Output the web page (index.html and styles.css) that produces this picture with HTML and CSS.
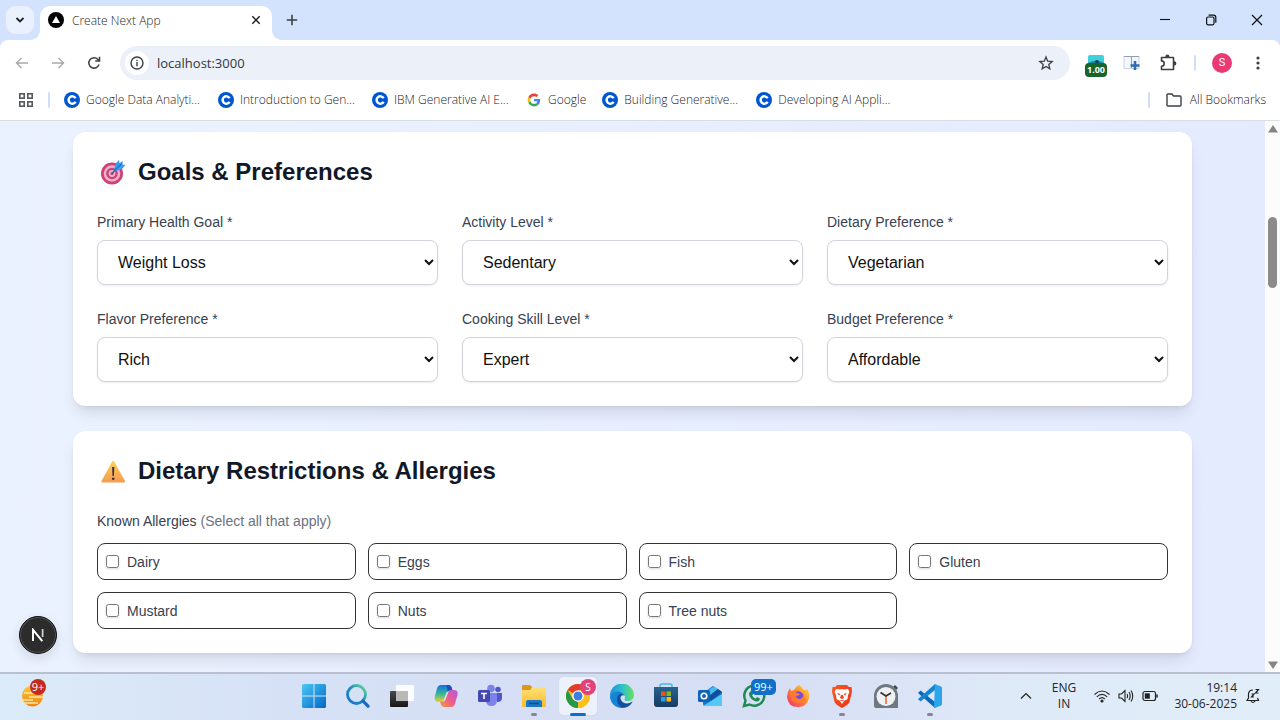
FILE: index.html
```html
<!DOCTYPE html>
<html lang="en">
<head>
<meta charset="utf-8">
<title>Create Next App</title>
<link rel="stylesheet" href="styles.css">
</head>
<body>
<svg class="defs" aria-hidden="true">
  <defs>
    <symbol id="coursera" viewBox="0 0 16 16"><circle cx="8" cy="8" r="8" fill="#0056d2"/><path d="M11.600 6.300A3.700 3.700 0 1 0 11.600 9.700" fill="none" stroke="#fff" stroke-width="2.500"/></symbol>
    <linearGradient id="gWin" x1="0" y1="0" x2="1" y2="1"><stop offset="0" stop-color="#4cc8f4"/><stop offset="1" stop-color="#0067c8"/></linearGradient>
    <linearGradient id="gSearch" x1="0" y1="1" x2="1" y2="0"><stop offset="0" stop-color="#1573cf"/><stop offset=".5" stop-color="#1b8bc4"/><stop offset="1" stop-color="#63e08c"/></linearGradient>
    <linearGradient id="gDark" x1="0" y1="0" x2="0" y2="1"><stop offset="0" stop-color="#4a4a4a"/><stop offset="1" stop-color="#161616"/></linearGradient>
    <linearGradient id="gCopA" x1="0" y1="0" x2="0" y2="1"><stop offset="0" stop-color="#1b6ee0"/><stop offset=".5" stop-color="#2fb59a"/><stop offset="1" stop-color="#f0cf2e"/></linearGradient>
    <linearGradient id="gCopB" x1="1" y1="0" x2="0" y2="1"><stop offset="0" stop-color="#b05be8"/><stop offset=".5" stop-color="#ee5a8d"/><stop offset="1" stop-color="#f89a3c"/></linearGradient>
    <linearGradient id="gFolder" x1="0" y1="0" x2="0" y2="1"><stop offset="0" stop-color="#ffe07a"/><stop offset="1" stop-color="#f8bc28"/></linearGradient>
    <linearGradient id="gEdge" x1="0" y1="0" x2="1" y2="0"><stop offset="0" stop-color="#1d8fdc"/><stop offset=".5" stop-color="#2cc0cf"/><stop offset="1" stop-color="#6be25c"/></linearGradient>
    <linearGradient id="gStore" x1="0" y1="0" x2="0" y2="1"><stop offset="0" stop-color="#28648f"/><stop offset="1" stop-color="#173a63"/></linearGradient>
    <linearGradient id="gFox" x1="1" y1="0" x2="0" y2="1"><stop offset="0" stop-color="#ffe14a"/><stop offset=".45" stop-color="#ff8a2a"/><stop offset="1" stop-color="#f0287a"/></linearGradient>
    <linearGradient id="gBrave" x1="0" y1="0" x2="1" y2="1"><stop offset="0" stop-color="#ff5a1f"/><stop offset="1" stop-color="#e8321c"/></linearGradient>
    <linearGradient id="gWarn" x1="0" y1="0" x2="0" y2="1"><stop offset="0" stop-color="#fdd05c"/><stop offset="1" stop-color="#f59a52"/></linearGradient>
    <linearGradient id="gSun" x1="0" y1="0" x2="0" y2="1"><stop offset="0" stop-color="#fcc93a"/><stop offset="1" stop-color="#f08514"/></linearGradient>
  </defs>
</svg>

<header class="chrome">
  <div class="tabstrip">
    <button class="tab-search" aria-label="Search tabs"><svg width="10" height="8" viewBox="0 0 10 8"><path d="M1.500 2 5 5.500 8.500 2" fill="none" stroke="#1f2023" stroke-width="1.800"/></svg></button>
    <div class="tab">
      <svg width="16" height="16" viewBox="0 0 16 16"><circle cx="8" cy="8" r="8" fill="#000"/><path d="M8 4 12 11H4Z" fill="#fff"/></svg>
      <span class="tab-title">Create Next App</span>
      <button class="icon-btn tab-close" aria-label="Close tab"><svg width="10" height="10" viewBox="0 0 10 10"><path d="M1.300 1.300 8.700 8.700M8.700 1.300 1.300 8.700" stroke="#1f2023" stroke-width="1.500"/></svg></button>
    </div>
    <button class="icon-btn new-tab" aria-label="New tab"><svg width="12" height="12" viewBox="0 0 12 12"><path d="M6 .800V11.200M.800 6H11.200" stroke="#3c4043" stroke-width="1.600"/></svg></button>
    <div class="window-controls">
      <button class="win-btn" aria-label="Minimize"><svg width="12" height="12" viewBox="0 0 12 12"><path d="M1 5.500H11" stroke="#111" stroke-width="1.100"/></svg></button>
      <button class="win-btn" aria-label="Restore"><svg width="12" height="12" viewBox="0 0 12 12"><g fill="none" stroke="#111" stroke-width="1.200"><rect x="1.600" y="3" width="7.400" height="7.800" rx="1.500"/><path d="M3.600 1.200H8.500Q10.800 1.200 10.800 3.500V8.800"/></g></svg></button>
      <button class="win-btn" aria-label="Close"><svg width="12" height="12" viewBox="0 0 12 12"><path d="M1 1 11 11M11 1 1 11" stroke="#111" stroke-width="1.200"/></svg></button>
    </div>
  </div>

  <div class="toolbar">
    <div class="tool-group">
      <button class="tool-btn" aria-label="Back"><svg width="14" height="12" viewBox="0 0 14 12"><path d="M13 6H1.500M6.500 1 1.500 6 6.500 11" fill="none" stroke="#a7a9ac" stroke-width="1.400"/></svg></button>
      <button class="tool-btn" aria-label="Forward"><svg width="14" height="12" viewBox="0 0 14 12"><path d="M1 6H12.500M7.500 1 12.500 6 7.500 11" fill="none" stroke="#a7a9ac" stroke-width="1.400"/></svg></button>
      <button class="tool-btn" aria-label="Reload"><svg width="14" height="14" viewBox="0 0 14 14"><path d="M12 8.500A5.200 5.200 0 1 1 10.800 3.300L12.300 4.800" fill="none" stroke="#3c4043" stroke-width="1.500"/><path d="M12.500 .800V5H8.200" fill="none" stroke="#3c4043" stroke-width="1.500"/></svg></button>
    </div>
    <div class="omnibox">
      <button class="site-info" aria-label="View site information"><svg width="14" height="14" viewBox="0 0 14 14"><circle cx="7" cy="7" r="6" fill="none" stroke="#3c4043" stroke-width="1.400"/><path d="M7 6V10.300M7 3.700V5" stroke="#3c4043" stroke-width="1.400"/></svg></button>
      <input class="address" type="text" aria-label="Address" value="localhost:3000">
      <button class="icon-btn" aria-label="Bookmark this tab"><svg width="16" height="16" viewBox="0 0 16 16"><path d="M8 2 9.700 6.200 14.200 6.600 10.800 9.500 11.800 13.800 8 11.500 4.200 13.800 5.200 9.500 1.800 6.600 6.300 6.200Z" fill="none" stroke="#3c4043" stroke-width="1.300"/></svg></button>
    </div>
    <div class="tool-group extensions">
      <button class="tool-btn ext" aria-label="Video speed 1.00"><svg width="16" height="16" viewBox="0 0 16 16"><rect width="16" height="14" rx="2" fill="#3fd0d8"/><path d="M0 8Q8 3 16 8V12H0Z" fill="#168fa5"/><circle cx="9" cy="7" r="2" fill="#123f63"/></svg><span class="ext-badge">1.00</span></button>
      <button class="tool-btn" aria-label="Screenshot"><svg width="18" height="16" viewBox="0 0 18 16"><rect x="1" y="1.500" width="15" height="12" fill="#f3f6fb" stroke="#cdd4df"/><path d="M1 1.500H16M8.500 1.500V13" stroke="#93a0b4"/><path d="M12 6V15M7.500 10.500H16.500" stroke="#2f6cad" stroke-width="2.600"/></svg></button>
      <button class="tool-btn" aria-label="Extensions"><svg width="18" height="18" viewBox="0 0 18 18"><path d="M2.500 3.500H14.500V15.500H2.500V12.300A2.700 2.700 0 0 0 2.500 6.900Z" fill="none" stroke="#3c4043" stroke-width="1.600" stroke-linejoin="round"/><path d="M6.300 3.500V2.700A2.100 2.100 0 0 1 10.500 2.700V3.500ZM14.500 7.300H15.300A2.100 2.100 0 0 1 15.300 11.500H14.500Z" fill="#3c4043"/></svg></button>
      <span class="divider"></span>
      <button class="tool-btn" aria-label="Profile"><span class="avatar">S</span></button>
      <button class="tool-btn" aria-label="Menu"><svg width="4" height="16" viewBox="0 0 4 16" fill="#3c4043"><circle cx="2" cy="3" r="1.600"/><circle cx="2" cy="8" r="1.600"/><circle cx="2" cy="13" r="1.600"/></svg></button>
    </div>
  </div>

  <nav class="bookmarks" aria-label="Bookmarks">
    <button class="icon-btn apps" aria-label="Tab groups"><svg width="16" height="16" viewBox="0 0 16 16" fill="none" stroke="#55585c" stroke-width="1.600"><rect x="1.800" y="1.800" width="4.400" height="4.400"/><rect x="9.800" y="1.800" width="4.400" height="4.400"/><rect x="1.800" y="9.800" width="4.400" height="4.400"/><rect x="9.800" y="9.800" width="4.400" height="4.400"/></svg></button>
    <span class="divider"></span>
    <div class="bookmark-list">
      <a class="bookmark long" href="#"><svg width="16" height="16"><use href="#coursera"/></svg>Google Data Analyti...</a>
      <a class="bookmark long" href="#"><svg width="16" height="16"><use href="#coursera"/></svg>Introduction to Gen...</a>
      <a class="bookmark long" href="#"><svg width="16" height="16"><use href="#coursera"/></svg>IBM Generative AI E...</a>
      <a class="bookmark" href="#"><svg width="16" height="16" viewBox="-6 -6 60 60"><path fill="#EA4335" d="M24 9.500c3.540 0 6.710 1.220 9.210 3.600l6.850-6.850C35.900 2.380 30.470 0 24 0 14.620 0 6.510 5.380 2.560 13.220l7.980 6.190C12.430 13.720 17.740 9.500 24 9.500z"/><path fill="#4285F4" d="M46.980 24.550c0-1.570-.15-3.090-.38-4.550H24v9.020h12.940c-.58 2.960-2.260 5.480-4.780 7.180l7.730 6c4.510-4.180 7.090-10.360 7.090-17.650z"/><path fill="#FBBC05" d="M10.530 28.590A14.500 14.500 0 0 1 9.770 24c0-1.600.27-3.140.76-4.590l-7.980-6.190A24 24 0 0 0 0 24c0 3.880.92 7.540 2.560 10.780z"/><path fill="#34A853" d="M24 48c6.480 0 11.930-2.130 15.890-5.810l-7.730-6c-2.150 1.450-4.920 2.300-8.160 2.300-6.260 0-11.570-4.220-13.470-9.910l-7.980 6.190C6.510 42.620 14.620 48 24 48z"/></svg>Google</a>
      <a class="bookmark long" href="#"><svg width="16" height="16"><use href="#coursera"/></svg>Building Generative...</a>
      <a class="bookmark long" href="#"><svg width="16" height="16"><use href="#coursera"/></svg>Developing AI Appli...</a>
    </div>
    <span class="divider"></span>
    <button class="all-bookmarks"><svg width="16" height="14" viewBox="0 0 16 14"><path d="M1 2Q1 1 2 1H6L7.500 3H14Q15 3 15 4V12Q15 13 14 13H2Q1 13 1 12Z" fill="none" stroke="#3c4043" stroke-width="1.400"/></svg>All Bookmarks</button>
  </nav>
</header>

<div class="viewport">
  <main class="page">
    <section class="card">
      <h2 class="card-title"><svg class="emoji" width="32" height="28" viewBox="0 0 32 28"><circle cx="15" cy="15.500" r="11" fill="#cf3f78"/><circle cx="15" cy="15.500" r="8.300" fill="#edb3cd"/><circle cx="15" cy="15.500" r="5.800" fill="#cf3f78"/><circle cx="15" cy="15.500" r="3.400" fill="#edb3cd"/><circle cx="15" cy="15.500" r="1.600" fill="#cf3f78"/><path d="M15 15.500 22 8" stroke="#315b8e" stroke-width="1.300"/><path d="M17 11 19 5 22 2 22.500 5 26 3 25.200 6.500 28.500 7 25 11 19 13Z" fill="#3b9cf0"/><path d="M18 12 25 5.500" stroke="#1c72cc" stroke-width="1.200"/></svg>Goals &amp; Preferences</h2>
      <div class="field-grid">
        <div class="field"><label for="goal">Primary Health Goal *</label><select id="goal"><option>Weight Loss</option></select></div>
        <div class="field"><label for="activity">Activity Level *</label><select id="activity"><option>Sedentary</option></select></div>
        <div class="field"><label for="diet">Dietary Preference *</label><select id="diet"><option>Vegetarian</option></select></div>
        <div class="field"><label for="flavor">Flavor Preference *</label><select id="flavor"><option>Rich</option></select></div>
        <div class="field"><label for="skill">Cooking Skill Level *</label><select id="skill"><option>Expert</option></select></div>
        <div class="field"><label for="budget">Budget Preference *</label><select id="budget"><option>Affordable</option></select></div>
      </div>
    </section>

    <section class="card">
      <h2 class="card-title"><svg class="emoji" width="32" height="28" viewBox="0 0 32 28"><path d="M15.200 4.500Q16.200 3 17.200 4.500L28 24Q28.500 25.500 27 25.500H5.500Q4 25.500 4.500 24Z" fill="url(#gWarn)"/><path d="M15.100 10H17.300L16.900 19H15.500Z" fill="#3c3340"/><circle cx="16.200" cy="21.800" r="1.300" fill="#3c3340"/></svg>Dietary Restrictions &amp; Allergies</h2>
      <fieldset class="allergies">
        <legend>Known Allergies <span class="hint">(Select all that apply)</span></legend>
        <div class="option-grid">
          <label class="option"><input type="checkbox">Dairy</label>
          <label class="option"><input type="checkbox">Eggs</label>
          <label class="option"><input type="checkbox">Fish</label>
          <label class="option"><input type="checkbox">Gluten</label>
          <label class="option"><input type="checkbox">Mustard</label>
          <label class="option"><input type="checkbox">Nuts</label>
          <label class="option"><input type="checkbox">Tree nuts</label>
        </div>
      </fieldset>
    </section>
  </main>
  <div class="scrollbar" aria-hidden="true">
    <svg width="10" height="8" viewBox="0 0 10 8"><path d="M5 0 10 7.500H0Z" fill="#858585"/></svg>
    <div class="track"><div class="thumb"></div></div>
    <svg width="10" height="8" viewBox="0 0 10 8"><path d="M5 8 10 .500H0Z" fill="#858585"/></svg>
  </div>
  <button class="dev-badge" aria-label="Open Next.js Dev Tools"><svg width="14" height="14" viewBox="0 0 14 14"><path d="M2 13V1.800L11.300 13.200" fill="none" stroke="#fff" stroke-width="2"/><path d="M11.600 1V9" stroke="#ccc" stroke-width="1.800"/></svg></button>
</div>

<footer class="taskbar">
  <div class="widgets">
    <button class="task" aria-label="Widgets"><svg width="24" height="26" viewBox="0 0 24 26"><circle cx="12.500" cy="13" r="10.500" fill="url(#gSun)"/><path d="M4 10H14M9 14H23M0 17H13M3 20H18" stroke="#fde5a4" stroke-width="1.500"/></svg><span class="badge red">9+</span></button>
  </div>
  <div class="apps-row">
    <button class="task" aria-label="Start"><svg width="24" height="24" viewBox="0 0 24 24" fill="url(#gWin)"><path d="M1.500 0H11.500V11.500H0V1.500Q0 0 1.500 0ZM12.500 0H22.500Q24 0 24 1.500V11.500H12.500ZM0 12.500H11.500V24H1.500Q0 24 0 22.500ZM12.500 12.500H24V22.500Q24 24 22.500 24H12.500Z"/></svg></button>
    <button class="task" aria-label="Search"><svg width="24" height="24" viewBox="0 0 24 24" fill="none"><circle cx="10.500" cy="10.500" r="9" stroke="url(#gSearch)" stroke-width="2.800"/><path d="M17 17 22 22.200" stroke="#1668c2" stroke-width="3.200" stroke-linecap="round"/></svg></button>
    <button class="task" aria-label="Task view"><svg width="24" height="24" viewBox="0 0 24 24"><rect y="7" width="18" height="16" rx="1" fill="url(#gDark)"/><rect x="6" y="1" width="18" height="16" rx="1" fill="#fff" fill-opacity=".88"/><path d="M6 7H18V17H6Z" fill="#b8b8b8"/></svg></button>
    <button class="task" aria-label="Copilot"><svg width="24" height="24" viewBox="0 0 24 24"><path d="M7 1H14Q17 1 17.800 4L18.500 7H15Q13 7 12.200 9L9.500 16.500Q9 18 7 18H4Q0 18 .700 13L3 4.500Q4 1 7 1Z" fill="url(#gCopA)"/><path d="M17 23H10Q7.500 23 6.700 20L6 17.500H9Q11 17.500 11.800 15L14.500 7.500Q15 6 17 6H20Q24.500 6 23.500 11L21 19.500Q20 23 17 23Z" fill="url(#gCopB)"/><path d="M12.500 1H14Q17 1 17.800 4L18.300 6H16Q14.500 6 13.700 8Z" fill="#1b4fc0"/></svg></button>
    <button class="task" aria-label="Teams"><svg width="24" height="24" viewBox="0 0 24 24"><circle cx="20" cy="5.500" r="2.800" fill="#5059c9"/><circle cx="13" cy="4.500" r="3.800" fill="#7b83eb"/><path d="M17 9H24V14Q24 18 19 18Z" fill="#5059c9"/><path d="M8 9H19V16Q19 22 13.500 22 8 22 8 16Z" fill="#7b83eb"/><rect y="6" width="12" height="12" rx="1.500" fill="#4349ae"/><path d="M3 9.500H9M6 9.500V15" stroke="#fff" stroke-width="1.600"/></svg></button>
    <button class="task running" aria-label="File Explorer"><svg width="24" height="24" viewBox="0 0 24 24"><path d="M0 2Q0 1 1.500 1H8L10 3V7H0Z" fill="#d9971c"/><path d="M0 6H8L10.500 3H22.500Q24 3 24 4.500V22Q24 23 23 23H1Q0 23 0 22Z" fill="url(#gFolder)"/><path d="M4 23V18Q4 16 6 16H18Q20 16 20 18V23Z" fill="#1a77c9"/><path d="M7 19.500H17" stroke="#104a86" stroke-width="1.500"/></svg></button>
    <button class="task active" aria-label="Google Chrome"><svg width="24" height="24" viewBox="0 0 24 24"><circle cx="12" cy="12" r="12" fill="#fbc11a"/><path d="M12 12 1.600 6A12 12 0 0 1 22.400 6H12Z" fill="#e33b2e"/><path d="M1.600 6 7 15.500 12 17.500 12 24A12 12 0 0 1 1.600 6Z" fill="#279847"/><path d="M22.400 6H12L17 15 12 24A12 12 0 0 0 22.400 6Z" fill="#fbc11a"/><circle cx="12" cy="12" r="5.800" fill="#fff"/><circle cx="12" cy="12" r="4.500" fill="#3b7ee8"/></svg><span class="badge pink">S</span></button>
    <button class="task" aria-label="Microsoft Edge"><svg width="24" height="24" viewBox="0 0 24 24"><path d="M0 12A12 12 0 0 1 24 11C24 15 21 17 18 17 15 17 14 16 14.800 14.500 16 12 13 8 8.500 8 4 8 1 10 0 12Z" fill="url(#gEdge)"/><path d="M0 12C1 9 4 7.500 8 7.500 11 7.500 14 9.500 15 12 13 10 10 10.500 9.500 13 9 17 13 21 18 20.500 20 20.500 21 20 22 19 20 22 16 24 12 24 5 24 0 18.500 0 12Z" fill="#1684d2"/><path d="M8 12C9 9.500 12 9.500 14.500 11.500 11.500 10.800 9.500 13 11 16 13 20 18 20.500 22.500 17.500 22.500 19 18 24 12.500 23.500 7.500 22 6 16 8 12Z" fill="#124e9e"/></svg></button>
    <button class="task" aria-label="Microsoft Store"><svg width="24" height="26" viewBox="0 0 24 26"><path d="M6 6V3Q6 1 8 1H16Q18 1 18 3V6" fill="none" stroke="#46b6e8" stroke-width="1.500"/><path d="M0 4H24V21Q24 24 21 24H3Q0 24 0 21Z" fill="url(#gStore)"/><path d="M7 8.500H11.500V13H7Z" fill="#ef5325"/><path d="M12.500 8.500H17V13H12.500Z" fill="#80bb1a"/><path d="M7 14H11.500V18.500H7Z" fill="#25a2ec"/><path d="M12.500 14H17V18.500H12.500Z" fill="#fbb912"/></svg></button>
    <button class="task" aria-label="Outlook"><svg width="24" height="24" viewBox="0 0 24 24"><path d="M5 9 15 2 24 8V20Q24 22 22 22H7Q5 22 5 20Z" fill="#1677d2"/><path d="M7 8 16 2.500 20 5 9 13Z" fill="#48b9f1"/><path d="M9 14 20 5 24 8 13 17Z" fill="#104d9a"/><path d="M5 22 24 10V20Q24 22 22 22Z" fill="#54c9f6"/><rect y="6" width="12" height="12" rx="1.500" fill="#0f64b8"/><circle cx="6" cy="12" r="2.800" fill="none" stroke="#fff" stroke-width="1.600"/></svg></button>
    <button class="task" aria-label="WhatsApp"><svg width="24" height="24" viewBox="0 0 24 24"><path d="M2 22 3.500 16.500A10 10 0 1 1 7.500 20.500Z" fill="none" stroke="#1e8b52" stroke-width="2.500"/><path d="M8 7.500 10 7 11.200 10 10 11.500Q11.500 14 13.800 14.500L15 13 18 14.500Q17.500 17.500 15 17.500C10.500 17 7 13 7 9.500Z" fill="#1e8b52"/></svg><span class="badge blue">99+</span></button>
    <button class="task" aria-label="Firefox"><svg width="24" height="24" viewBox="0 0 24 24"><path d="M13 1Q17 4 17.500 6 20 6 21 5 24 9 23 14 21 23 12 23 2 23 1 13 1 8 4 4L5 7 8 6Q9 3 13 1Z" fill="url(#gFox)"/><circle cx="12" cy="13" r="5.800" fill="#7b48d8"/><path d="M4 8Q8 6 11 9L14 10Q13 12 10 12 10 15 14 15 18 14 17 9 21 15 16 18 10 21 6 16 4 12 4 8Z" fill="#ff7b29"/></svg></button>
    <button class="task running" aria-label="Brave"><svg width="24" height="24" viewBox="0 0 24 24"><path d="M7 1H17L19 3 21.500 3 22 7.500 19.500 18Q18 21 12 24 6 21 4.500 18L2 7.500 2.500 3H5Z" fill="url(#gBrave)"/><path d="M6 5 10 5.500 12 5 14 5.500 18 5 19.500 8 18 11 17.500 15 14 17 12 20 10 17 6.500 15 6 11 4.500 8Z" fill="#fff"/><path d="M7 9 10.500 10 9 11.500ZM17 9 13.500 10 15 11.500ZM11 11 10 14 12 15 14 14 13 11ZM9 16H15L12 17Z" fill="#ee4520"/></svg></button>
    <button class="task" aria-label="Clock"><svg width="24" height="24" viewBox="0 0 24 24"><path d="M19 3 21 1 24 4 22 6Z" fill="#3d454d"/><path d="M0 12A12 12 0 0 1 24 12V24H2Q0 24 0 22Z" fill="#6e7881"/><circle cx="12" cy="12.500" r="9.500" fill="#eef0f2"/><path d="M12 12V20" stroke="#e3682d" stroke-width="1.500"/><path d="M6.500 8.500 12 12 17 9" fill="none" stroke="#333" stroke-width="1.700"/></svg></button>
    <button class="task running" aria-label="Visual Studio Code"><svg width="24" height="24" viewBox="0 0 24 24"><path d="M2.500 6.500 17 18V24L0 9Z" fill="#0b69b8"/><path d="M0 15 17 0V6L2.500 17.500Z" fill="#1685d0"/><path d="M17 0 23 2.500Q24 3 24 4V20Q24 21 23 21.500L17 24 16 23Z" fill="#2aa5ee"/></svg></button>
  </div>
  <div class="tray">
    <button class="tray-btn" aria-label="Show hidden icons"><svg width="12" height="8" viewBox="0 0 12 8"><path d="M1 6.500 6 1.500 11 6.500" fill="none" stroke="#222" stroke-width="1.200"/></svg></button>
    <button class="tray-text language">ENG<br>IN</button>
    <button class="tray-btn quick" aria-label="Network, volume, battery">
      <svg width="16" height="14" viewBox="0 0 16 14" fill="none" stroke="#222" stroke-width="1.100"><path d="M.500 5.500Q8-1.500 15.500 5.500M2.800 7.800Q8 3 13.200 7.800M5.200 10Q8 7.300 10.800 10"/><circle cx="8" cy="12" r="1" fill="#222"/></svg>
      <svg width="16" height="14" viewBox="0 0 16 14" fill="none" stroke="#222" stroke-width="1.100"><path d="M1 5H3.500L7 1.500V12.500L3.500 9H1ZM9 5Q10.200 7 9 9M11 3Q13.400 7 11 11M13 1.500Q16.500 7 13 12.500"/></svg>
      <svg width="16" height="14" viewBox="0 0 16 14"><rect x="1" y="2.500" width="12.500" height="9" rx="2" fill="none" stroke="#222" stroke-width="1.200"/><rect x="2.800" y="4.300" width="5" height="5.400" fill="#222"/><path d="M15 5.500V8.500" stroke="#222" stroke-width="1.500"/></svg>
    </button>
    <button class="tray-text clock">19:14<br>30-06-2025</button>
    <button class="tray-btn" aria-label="Notifications"><svg width="14" height="16" viewBox="0 0 14 16" fill="none" stroke="#222" stroke-width="1.200"><path d="M7 2Q2.500 2 2.500 6.500V10L1 12.500H12.500L11.500 10M5 13Q7 16 9 13"/><path d="M5.500 6H8L5.500 9H8M9.500 1.500H12.500L9.500 5H12.500"/></svg></button>
  </div>
</footer>
</body>
</html>
```
FILE: styles.css
```css
* { box-sizing: border-box; }

body {
  margin: 0;
  height: 100vh;
  display: flex;
  flex-direction: column;
  overflow: hidden;
  background: #fff;
  font-family: "Liberation Sans", Arial, sans-serif;
}

button {
  border: 0;
  padding: 0;
  background: none;
  font: inherit;
  color: inherit;
}

svg { display: block; flex: none; }
.defs { position: absolute; width: 0; height: 0; }

/* Browser chrome */
.chrome {
  flex: none;
  background: #d3e2fd;
  color: #1f2225;
  font: 300 12px/16px "Open Sans", "Noto Sans", sans-serif;
}

.tabstrip { display: flex; height: 40px; padding-left: 6px; }

.tab-search {
  display: grid;
  place-items: center;
  width: 28px;
  height: 28px;
  margin: 6px 6px 0 0;
  border-radius: 9px;
  background: #e9f0fe;
}

.tab {
  position: relative;
  display: flex;
  align-items: center;
  width: 232px;
  margin-top: 6px;
  padding: 0 6px 6px 8px;
  border-radius: 10px 10px 0 0;
  background: #fff;
}
.tab::before,
.tab::after {
  content: "";
  position: absolute;
  bottom: 0;
  width: 10px;
  height: 10px;
}
.tab::before { left: -10px; background: radial-gradient(circle at 0 0, transparent 10px, #fff 10px); }
.tab::after { right: -10px; background: radial-gradient(circle at 100% 0, transparent 10px, #fff 10px); }
.tab-title { flex: 1; margin-left: 8px; padding-top: 2px; white-space: nowrap; }

.icon-btn { display: grid; place-items: center; width: 20px; height: 20px; flex: none; }
.new-tab { margin: 10px 0 0 10px; }
.window-controls { display: flex; margin-left: auto; }
.win-btn { display: grid; place-items: center; width: 46px; height: 40px; }

.toolbar {
  display: flex;
  align-items: center;
  gap: 8px;
  height: 40px;
  padding: 6px 4px 0;
  border-radius: 8px 8px 0 0;
  background: #fff;
}
.tool-group { display: flex; align-items: center; }
.tool-btn { display: grid; place-items: center; width: 36px; height: 34px; }
.omnibox {
  flex: 1;
  display: flex;
  align-items: center;
  height: 34px;
  padding: 0 14px 0 5px;
  border-radius: 17px;
  background: #ebf0f9;
}
.site-info { display: grid; place-items: center; width: 24px; height: 24px; border-radius: 50%; background: #fff; }
.address {
  flex: 1;
  min-width: 0;
  border: 0;
  padding: 0 8px;
  background: none;
  color: #33363a;
  font: 13px/20px "Open Sans", "Noto Sans", sans-serif;
}
.ext { position: relative; }
.ext-badge {
  position: absolute;
  left: 7px;
  top: 17px;
  width: 22px;
  border-radius: 4px;
  background: #17652c;
  color: #fff;
  font: bold 9px/14px "Open Sans", sans-serif;
}
.divider { width: 2px; height: 16px; margin: 0 8px; border-radius: 1px; background: #cfdffb; }
.avatar {
  width: 20px;
  border-radius: 50%;
  background: #e93a75;
  color: #fff;
  font: 11px/20px Roboto, sans-serif;
}

.bookmarks {
  display: flex;
  align-items: center;
  height: 41px;
  padding: 0 14px 0 16px;
  border-bottom: 1px solid #d9dde4;
  background: #fff;
}
.apps { margin-right: 4px; }
.bookmark-list { flex: 1; display: flex; gap: 16px; margin-left: 6px; }
.bookmark { display: flex; align-items: center; gap: 6px; color: inherit; text-decoration: none; white-space: nowrap; }
.long { width: 138px; }
.all-bookmarks { display: flex; align-items: center; gap: 8px; margin-left: 8px; }

/* Page */
.viewport { position: relative; flex: 1; min-height: 0; display: flex; }
.page {
  flex: 1;
  overflow: hidden;
  display: flex;
  flex-direction: column;
  gap: 25px;
  padding: 11px 73px;
  background: linear-gradient(to right, #ebf2ff, #e5ebff);
}
.card {
  flex: none;
  padding: 24px;
  border-radius: 12px;
  background: #fff;
  box-shadow: 0 10px 15px -3px rgb(0 0 0 / .1), 0 4px 6px -4px rgb(0 0 0 / .1), 0 0 1px rgb(0 0 0 / .1);
}
.card-title {
  display: flex;
  align-items: center;
  gap: 9px;
  margin: 0 0 24px;
  color: #111827;
  font-size: 24px;
  line-height: 32px;
}
.field-grid { display: grid; grid-template-columns: repeat(3, 1fr); gap: 24px; }
.field { display: flex; flex-direction: column; gap: 8px; }
.field label, .allergies legend { color: #374151; font-size: 14px; line-height: 20px; }
.field select {
  height: 45px;
  padding: 0 16px;
  border: 1px solid #d1d5db;
  border-radius: 8px;
  background-color: #fff;
  color: #111;
  font: 16px/24px "Liberation Sans", Arial, sans-serif;
  box-shadow: 0 1px 2px rgb(0 0 0 / .08);
}
.allergies { margin: 0; padding: 0; border: 0; }
.allergies legend { padding: 0; margin-bottom: 12px; }
.hint { color: #6b7280; }
.option-grid { display: grid; grid-template-columns: repeat(4, 1fr); gap: 12px; }
.option {
  display: flex;
  align-items: center;
  gap: 8px;
  height: 37px;
  padding: 0 8px;
  border: 1px solid #333;
  border-radius: 8px;
  color: #374151;
  font-size: 14px;
}
.option input {
  width: 13px;
  height: 13px;
  margin: 0;
  border-radius: 3px;
  box-shadow: 0 1px 2px rgb(0 0 0 / .15);
}

.scrollbar {
  display: flex;
  flex-direction: column;
  align-items: center;
  width: 15px;
  padding: 4px 0 3px;
  background: #fcfcfc;
}
.track { flex: 1; width: 9px; padding-top: 84px; }
.thumb { height: 71px; border-radius: 5px; background: #8b8b8b; }

.dev-badge {
  position: absolute;
  left: 19px;
  bottom: 18px;
  display: grid;
  place-items: center;
  width: 38px;
  height: 38px;
  border: 1px solid #111;
  border-radius: 50%;
  background: #2c2c2c;
  box-shadow: inset 0 0 0 1px #555, 0 4px 12px rgb(0 0 0 / .12);
}

/* Taskbar */
.taskbar {
  flex: none;
  display: grid;
  grid-template-columns: 292fr auto 328fr;
  height: 48px;
  border-top: 2px solid #b9bfce;
  background: linear-gradient(to right, #dcebf8, #d6e1f6 22%, #d6def4 60%, #dfeaf8 80%, #e1edf8);
  color: #24262a;
  font: 12px/16px "Open Sans", "Noto Sans", sans-serif;
}
.widgets { padding-left: 10px; }
.apps-row { display: flex; }
.task { position: relative; display: grid; place-items: center; width: 44px; height: 44px; }
.active { isolation: isolate; }
.active::before {
  content: "";
  position: absolute;
  z-index: -1;
  inset: 3px;
  border-radius: 4px;
  background: #ecf1fb;
  box-shadow: 0 0 1px #aab3c8;
}
.running::after,
.active::after {
  content: "";
  position: absolute;
  bottom: 2px;
  left: 19px;
  width: 6px;
  height: 3px;
  border-radius: 2px;
  background: #84878f;
}
.active::after { left: 14px; width: 16px; background: #0b6fc9; }
.badge {
  position: absolute;
  top: 5px;
  left: 20px;
  min-width: 16px;
  border-radius: 8px;
  color: #fff;
  font: 11px/16px "Open Sans", sans-serif;
  text-align: center;
}
.red { background: #c42b1c; }
.pink { background: #e2427c; font-size: 10px; left: 24px; }
.blue { background: #0f6fcb; left: 19px; padding: 0 3px; border-radius: 5px; }

.tray { display: flex; align-items: center; justify-content: flex-end; padding: 0 20px 2px 0; }
.tray-btn { display: flex; }
.tray-text { text-align: center; }
.language { width: 36px; margin-left: 14px; }
.quick { gap: 8px; margin-left: 12px; }
.clock { width: 70px; margin: 0 9px; text-align: right; }
```
